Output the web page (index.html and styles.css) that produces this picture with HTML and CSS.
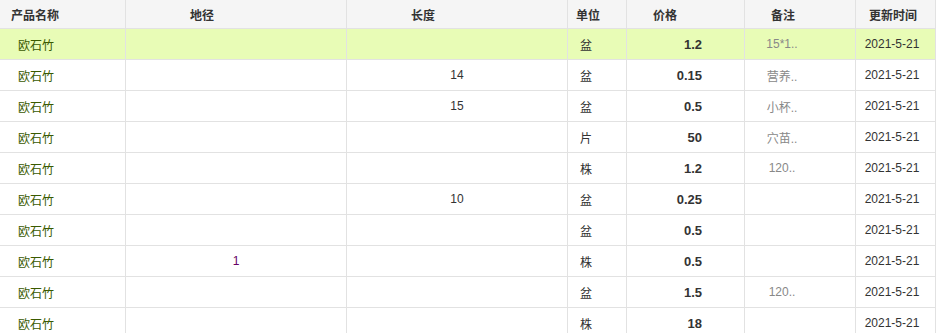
FILE: index.html
```html
<!DOCTYPE html>
<html lang="zh">
<head>
<meta charset="utf-8">
<title>产品价格</title>
<link rel="stylesheet" href="styles.css">
</head>
<body>
<table class="grid">
  <colgroup>
    <col class="c-name"><col class="c-dia"><col class="c-len"><col class="c-unit"><col class="c-price"><col class="c-note"><col class="c-date">
  </colgroup>
  <thead>
    <tr>
      <th class="h-name">产品名称</th>
      <th class="h-pad">地径</th>
      <th class="h-pad">长度</th>
      <th class="h-unit">单位</th>
      <th class="h-mid">价格</th>
      <th class="h-mid">备注</th>
      <th class="h-date">更新时间</th>
    </tr>
  </thead>
  <tbody>
    <tr class="hl"><td class="name">欧石竹</td><td class="num"></td><td class="num"></td><td class="unit">盆</td><td class="price">1.2</td><td class="note">15*1..</td><td class="date">2021-5-21</td></tr>
    <tr><td class="name">欧石竹</td><td class="num"></td><td class="num">14</td><td class="unit">盆</td><td class="price">0.15</td><td class="note">营养..</td><td class="date">2021-5-21</td></tr>
    <tr><td class="name">欧石竹</td><td class="num"></td><td class="num">15</td><td class="unit">盆</td><td class="price">0.5</td><td class="note">小杯..</td><td class="date">2021-5-21</td></tr>
    <tr><td class="name">欧石竹</td><td class="num"></td><td class="num"></td><td class="unit">片</td><td class="price">50</td><td class="note">穴苗..</td><td class="date">2021-5-21</td></tr>
    <tr><td class="name">欧石竹</td><td class="num"></td><td class="num"></td><td class="unit">株</td><td class="price">1.2</td><td class="note">120..</td><td class="date">2021-5-21</td></tr>
    <tr><td class="name">欧石竹</td><td class="num"></td><td class="num">10</td><td class="unit">盆</td><td class="price">0.25</td><td class="note"></td><td class="date">2021-5-21</td></tr>
    <tr><td class="name">欧石竹</td><td class="num"></td><td class="num"></td><td class="unit">盆</td><td class="price">0.5</td><td class="note"></td><td class="date">2021-5-21</td></tr>
    <tr><td class="name">欧石竹</td><td class="num dia">1</td><td class="num"></td><td class="unit">株</td><td class="price">0.5</td><td class="note"></td><td class="date">2021-5-21</td></tr>
    <tr><td class="name">欧石竹</td><td class="num"></td><td class="num"></td><td class="unit">盆</td><td class="price">1.5</td><td class="note">120..</td><td class="date">2021-5-21</td></tr>
    <tr><td class="name">欧石竹</td><td class="num"></td><td class="num"></td><td class="unit">株</td><td class="price">18</td><td class="note"></td><td class="date">2021-5-21</td></tr>
  </tbody>
</table>
</body>
</html>
```
FILE: styles.css
```css
html, body {
  margin: 0;
  padding: 0;
  background: #fff;
}
body {
  font-family: "Liberation Sans", "Noto Sans CJK SC", sans-serif;
  font-size: 12px;
  color: #333;
  overflow: hidden;
}
.grid {
  width: 936px;
  table-layout: fixed;
  border-collapse: separate;
  border-spacing: 0;
}
.c-name { width: 126px; }
.c-dia { width: 221px; }
.c-len { width: 221px; }
.c-unit { width: 59px; }
.c-price { width: 118px; }
.c-note { width: 111px; }
.c-date { width: 80px; }

.grid th, .grid td {
  box-sizing: border-box;
  border-right: 1px solid #e2e2e2;
  border-bottom: 1px solid #e2e2e2;
  padding: 0;
  vertical-align: middle;
  white-space: nowrap;
  overflow: hidden;
}
.grid th {
  height: 29px;
  background: #f5f5f5;
  font-weight: bold;
  text-align: left;
  color: #333;
}
.grid td {
  height: 31px;
}
.h-name { padding-left: 11px !important; }
.h-pad { padding-left: 64px !important; }
.h-unit { padding-left: 8px !important; }
.h-mid { padding-left: 26px !important; }
.h-date { padding-left: 13px !important; }

.hl td { background: #e8fcb6; }

.name {
  padding-left: 18px !important;
  color: #3a5a00;
}
.num {
  text-align: center;
  color: #333;
}
.num.dia { color: #660066; }
.unit {
  padding-left: 12px !important;
  color: #333;
}
.price {
  text-align: right;
  padding-right: 42px !important;
  font-weight: bold;
  font-size: 13px;
  color: #333;
}
.note {
  text-align: center;
  padding-right: 36px !important;
  color: #888;
}
.date {
  text-align: center;
  padding-right: 7px !important;
  color: #333;
}
```
